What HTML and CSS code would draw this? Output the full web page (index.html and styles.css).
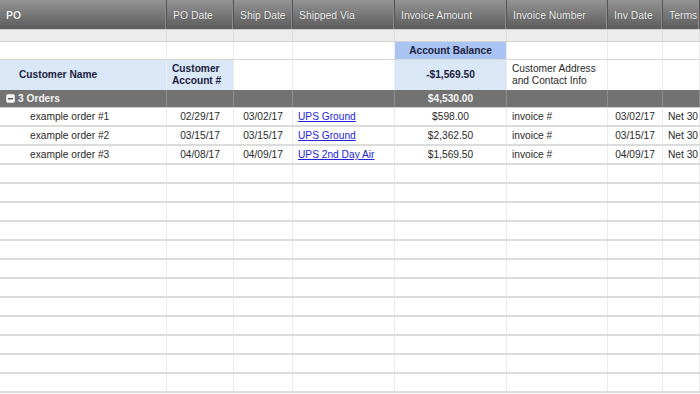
FILE: index.html
```html
<!DOCTYPE html>
<html>
<head>
<meta charset="utf-8">
<link rel="stylesheet" href="styles.css">
</head>
<body>
<div class="sheet">
  <div class="row head">
    <div class="cell po-h">PO</div>
    <div class="cell">PO Date</div>
    <div class="cell">Ship Date</div>
    <div class="cell">Shipped Via</div>
    <div class="cell">Invoice Amount</div>
    <div class="cell">Invoice Number</div>
    <div class="cell">Inv Date</div>
    <div class="cell">Terms</div>
  </div>
  <div class="row sub">
    <div class="cell"></div><div class="cell"></div><div class="cell"></div><div class="cell"></div>
    <div class="cell"></div><div class="cell"></div><div class="cell"></div><div class="cell"></div>
  </div>
  <div class="row bal">
    <div class="cell"></div><div class="cell"></div><div class="cell"></div><div class="cell"></div>
    <div class="cell acct">Account Balance</div>
    <div class="cell"></div><div class="cell"></div><div class="cell"></div>
  </div>
  <div class="row cust">
    <div class="cell lb name">Customer Name</div>
    <div class="cell lb bold">Customer<br>Account #</div>
    <div class="cell"></div><div class="cell"></div>
    <div class="cell lb bold center">-$1,569.50</div>
    <div class="cell">Customer Address<br>and Contact Info</div>
    <div class="cell"></div><div class="cell"></div>
  </div>
  <div class="row group">
    <div class="cell"><svg class="minus" width="9" height="9" viewBox="0 0 9 9"><rect x="0.5" y="0.5" width="8" height="8" rx="1.5" fill="#f4f4f4" stroke="#dcdcdc"/><rect x="2" y="4" width="5" height="1.4" fill="#555"/></svg>3 Orders</div>
    <div class="cell"></div><div class="cell"></div><div class="cell"></div>
    <div class="cell center">$4,530.00</div>
    <div class="cell"></div><div class="cell"></div><div class="cell"></div>
  </div>
  <div class="row data">
    <div class="cell indent">example order #1</div>
    <div class="cell center">02/29/17</div>
    <div class="cell center">03/02/17</div>
    <div class="cell"><a href="#">UPS Ground</a></div>
    <div class="cell center">$598.00</div>
    <div class="cell">invoice #</div>
    <div class="cell center">03/02/17</div>
    <div class="cell">Net 30</div>
  </div>
  <div class="row data">
    <div class="cell indent">example order #2</div>
    <div class="cell center">03/15/17</div>
    <div class="cell center">03/15/17</div>
    <div class="cell"><a href="#">UPS Ground</a></div>
    <div class="cell center">$2,362.50</div>
    <div class="cell">invoice #</div>
    <div class="cell center">03/15/17</div>
    <div class="cell">Net 30</div>
  </div>
  <div class="row data">
    <div class="cell indent">example order #3</div>
    <div class="cell center">04/08/17</div>
    <div class="cell center">04/09/17</div>
    <div class="cell"><a href="#">UPS 2nd Day Air</a></div>
    <div class="cell center">$1,569.50</div>
    <div class="cell">invoice #</div>
    <div class="cell center">04/09/17</div>
    <div class="cell">Net 30</div>
  </div>
  <div class="row data"><div class="cell"></div><div class="cell"></div><div class="cell"></div><div class="cell"></div><div class="cell"></div><div class="cell"></div><div class="cell"></div><div class="cell"></div></div>
  <div class="row data"><div class="cell"></div><div class="cell"></div><div class="cell"></div><div class="cell"></div><div class="cell"></div><div class="cell"></div><div class="cell"></div><div class="cell"></div></div>
  <div class="row data"><div class="cell"></div><div class="cell"></div><div class="cell"></div><div class="cell"></div><div class="cell"></div><div class="cell"></div><div class="cell"></div><div class="cell"></div></div>
  <div class="row data"><div class="cell"></div><div class="cell"></div><div class="cell"></div><div class="cell"></div><div class="cell"></div><div class="cell"></div><div class="cell"></div><div class="cell"></div></div>
  <div class="row data"><div class="cell"></div><div class="cell"></div><div class="cell"></div><div class="cell"></div><div class="cell"></div><div class="cell"></div><div class="cell"></div><div class="cell"></div></div>
  <div class="row data"><div class="cell"></div><div class="cell"></div><div class="cell"></div><div class="cell"></div><div class="cell"></div><div class="cell"></div><div class="cell"></div><div class="cell"></div></div>
  <div class="row data"><div class="cell"></div><div class="cell"></div><div class="cell"></div><div class="cell"></div><div class="cell"></div><div class="cell"></div><div class="cell"></div><div class="cell"></div></div>
  <div class="row data"><div class="cell"></div><div class="cell"></div><div class="cell"></div><div class="cell"></div><div class="cell"></div><div class="cell"></div><div class="cell"></div><div class="cell"></div></div>
  <div class="row data"><div class="cell"></div><div class="cell"></div><div class="cell"></div><div class="cell"></div><div class="cell"></div><div class="cell"></div><div class="cell"></div><div class="cell"></div></div>
  <div class="row data"><div class="cell"></div><div class="cell"></div><div class="cell"></div><div class="cell"></div><div class="cell"></div><div class="cell"></div><div class="cell"></div><div class="cell"></div></div>
  <div class="row data"><div class="cell"></div><div class="cell"></div><div class="cell"></div><div class="cell"></div><div class="cell"></div><div class="cell"></div><div class="cell"></div><div class="cell"></div></div>
  <div class="row data"><div class="cell"></div><div class="cell"></div><div class="cell"></div><div class="cell"></div><div class="cell"></div><div class="cell"></div><div class="cell"></div><div class="cell"></div></div>
</div>
</body>
</html>
```

FILE: styles.css
```css
* { box-sizing: border-box; }
html, body {
  margin: 0;
  padding: 0;
  background: #ffffff;
  overflow: hidden;
}
body {
  font-family: "Liberation Sans", Arial, sans-serif;
  font-size: 10.2px;
  color: #2a2a2a;
}
.sheet {
  width: 700px;
  height: 394px;
  overflow: hidden;
}
.row {
  display: grid;
  grid-template-columns: 167px 67px 59px 102px 112px 101px 55px 1fr;
}
.cell {
  display: flex;
  align-items: center;
  padding: 0 5px;
  border-right: 1px solid #ececec;
  white-space: nowrap;
  line-height: 12px;
  overflow: hidden;
}
.head {
  height: 30px;
  background: linear-gradient(#959595, #7a7a7a 45%, #5c5c5c);
  border-bottom: 1px solid #cfcfcf;
}
.head .cell {
  color: #f4f4f4;
  font-size: 10.4px;
  text-shadow: 0 0 1px rgba(0,0,0,0.6);
  border-right: 1px solid #555;
  box-shadow: inset -1px 0 0 #8c8c8c;
  padding: 2px 5px 0 6px;
}
.head .po-h { font-weight: bold; }
.sub {
  height: 12px;
  background: #ececec;
  border-bottom: 1px solid #d2d2d2;
}
.sub .cell { border-right: 1px solid #dedede; }
.bal {
  height: 18px;
  border-bottom: 1px solid #d8d8d8;
}
.acct {
  background: #a9c3f2;
  justify-content: center;
  font-weight: bold;
  color: #1d2340;
}
.cust {
  height: 30px;
}
.lb { background: #d9e7f6; }
.bold { font-weight: bold; color: #1d2340; }
.name { font-weight: bold; color: #1d2340; padding-left: 19px; }
.center { justify-content: center; }
.group {
  height: 18px;
  background: #727272;
  border-bottom: 1px solid #cfcfcf;
}
.group .cell {
  color: #f4f4f4;
  font-weight: bold;
  border-right: 1px solid #8e8e8e;
}
.minus {
  margin: 0 3px 0 1px;
  flex: none;
}
.data {
  height: 19px;
  border-bottom: 2px solid #dcdcdc;
}
.data .cell { color: #2a2a2a; padding-top: 1px; }
.indent { padding-left: 30px; }
.data a {
  color: #2424d6;
  text-decoration: underline;
}
```
